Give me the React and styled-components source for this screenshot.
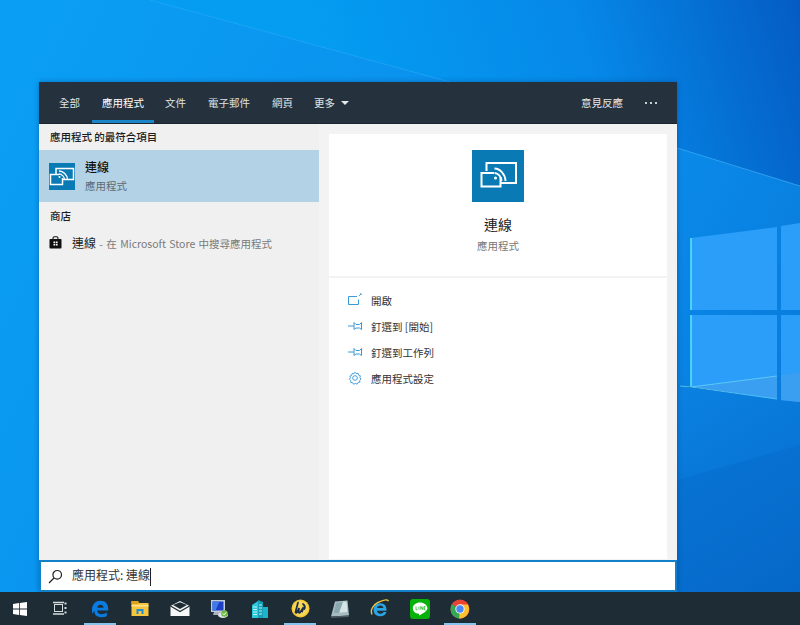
import React from "react";
import styled, { createGlobalStyle } from "styled-components";

const GlobalStyle = createGlobalStyle`
  html, body {
    margin: 0;
    padding: 0;
    overflow: hidden;
  }
  body {
    font-family: "Noto Sans CJK TC", "Noto Sans", sans-serif;
  }
`;

const Screen = styled.div`
  position: relative;
  width: 800px;
  height: 625px;
  display: flex;
  flex-direction: column;
  overflow: hidden;
  background: #0a7fdf;
`;

const Wallpaper = styled.svg`
  position: absolute;
  left: 0;
  top: 0;
`;

const Desktop = styled.div`
  position: relative;
  flex: 1;
  padding: 82px 0 0 39px;
`;

const Panel = styled.div`
  width: 638px;
  height: 510px;
  display: flex;
  flex-direction: column;
  box-shadow: 0 0 5px rgba(0, 40, 90, 0.4);
`;

const Header = styled.div`
  height: 42px;
  flex-shrink: 0;
  background: #25323d;
  border-bottom: 1px solid #1a252e;
  box-sizing: border-box;
  display: flex;
  align-items: stretch;
  padding: 0 20px;
  color: #e4e8ea;
  font-size: 10.5px;
`;

const Tab = styled.div`
  display: flex;
  align-items: center;
  gap: 6px;
  margin-right: ${p => p.$gap}px;
  position: relative;
  color: ${p => (p.$active ? "#ffffff" : "#dfe3e6")};
  &::after {
    content: "";
    display: ${p => (p.$active ? "block" : "none")};
    position: absolute;
    left: -10px;
    right: -10px;
    bottom: 0;
    height: 3px;
    background: #1a86c8;
  }
`;

const Caret = styled.span`
  width: 0;
  height: 0;
  border-left: 4px solid transparent;
  border-right: 4px solid transparent;
  border-top: 4px solid #e4e8ea;
`;

const HeaderRight = styled.div`
  margin-left: auto;
  display: flex;
  align-items: center;
  gap: 22px;
`;

const Dots = styled.div`
  display: flex;
  gap: 3px;
  & span {
    width: 2px;
    height: 2px;
    background: #c8ced2;
  }
`;

const Body = styled.div`
  flex: 1;
  min-height: 0;
  display: flex;
  background: #f3f3f3;
`;

const LeftColumn = styled.div`
  width: 280px;
  flex-shrink: 0;
  background: #f0f0f0;
  display: flex;
  flex-direction: column;
`;

const SectionTitle = styled.div`
  height: ${p => p.$height}px;
  box-sizing: border-box;
  padding: 0 0 2px 11px;
  display: flex;
  align-items: center;
  font-size: 10.5px;
  font-weight: 500;
  color: #1d1d1d;
`;

const BestMatch = styled.div`
  height: 52px;
  background: #b4d2e5;
  display: flex;
  align-items: center;
  padding-left: 10px;
  gap: 10px;
`;

const MatchText = styled.div`
  display: flex;
  flex-direction: column;
  gap: 4px;
  margin-top: -1px;
`;

const MatchName = styled.div`
  font-size: 12px;
  line-height: 16px;
  font-weight: 500;
  color: #111;
`;

const MatchKind = styled.div`
  font-size: 10.5px;
  line-height: 14px;
  color: #5c6b76;
`;

const StoreRow = styled.div`
  height: 28px;
  box-sizing: border-box;
  padding: 0 0 4px 10px;
  display: flex;
  align-items: center;
  gap: 10px;
  font-size: 10.5px;
  word-spacing: 1px;
  color: #7a7a7a;
  & b {
    font-weight: 400;
    font-size: 12px;
    color: #222;
  }
`;

const RightColumn = styled.div`
  flex: 1;
  padding: 10px 10px 0;
  display: flex;
`;

const Card = styled.div`
  flex: 1;
  background: #fff;
  display: flex;
  flex-direction: column;
  margin-bottom: 1px;
`;

const Hero = styled.div`
  height: 144px;
  flex-shrink: 0;
  box-sizing: border-box;
  padding-top: 16px;
  border-bottom: 2px solid #f3f3f3;
  display: flex;
  flex-direction: column;
  align-items: center;
`;

const HeroName = styled.div`
  margin-top: 11px;
  font-size: 14px;
  line-height: 22px;
  color: #1a1a1a;
`;

const HeroKind = styled.div`
  margin-top: 4px;
  font-size: 10.5px;
  line-height: 14px;
  color: #777;
`;

const Actions = styled.div`
  padding-top: 9px;
  display: flex;
  flex-direction: column;
`;

const Action = styled.div`
  height: 26px;
  display: flex;
  align-items: center;
  padding-left: 19px;
  gap: 9px;
  font-size: 10.5px;
  color: #333;
`;

const SearchBox = styled.div`
  height: 32px;
  flex-shrink: 0;
  box-sizing: border-box;
  background: #fff;
  border: 2px solid #1181c9;
  display: flex;
  align-items: center;
  padding-left: 7px;
  gap: 9px;
  font-size: 12px;
  color: #333;
`;

const Cursor = styled.span`
  display: inline-block;
  width: 1px;
  height: 18px;
  background: #222;
  vertical-align: middle;
`;

const Taskbar = styled.div`
  height: 33px;
  flex-shrink: 0;
  position: relative;
  background: #1e2c35;
  display: flex;
`;

const TaskItem = styled.div`
  width: 40px;
  display: flex;
  align-items: center;
  justify-content: center;
  position: relative;
  &::after {
    content: "";
    display: ${p => (p.$open ? "block" : "none")};
    position: absolute;
    left: 4px;
    right: 4px;
    bottom: 0;
    height: 2px;
    background: #84c4ee;
  }
`;

const ConnectGlyph = () => (
  <svg width="52" height="52" viewBox="0 0 52 52">
    <rect width="52" height="52" fill="#0a7ab5" />
    <path d="M14.500 21V13H44V33H29" fill="none" stroke="#fff" strokeWidth="2" />
    <path d="M22 23H9.500V36.500H28.500V27" fill="none" stroke="#fff" strokeWidth="2" />
    <path d="M22.500 18.500C28 18.500 33.500 24.500 33.500 31M22.500 23C26 23 29.500 26.500 29.500 31" fill="none" stroke="#fff" strokeWidth="1.800" />
    <circle cx="23.500" cy="28" r="1.500" fill="#fff" />
  </svg>
);

const SmallConnect = () => (
  <svg width="26" height="27" viewBox="0 0 26 27">
    <rect width="26" height="27" fill="#0a7ab5" />
    <path d="M7 11V5.500H24.500V16.500H13" fill="none" stroke="#fff" strokeWidth="1.500" />
    <path d="M10 11.500H1.500V21.500H13.500V15" fill="none" stroke="#fff" strokeWidth="1.500" />
    <path d="M10 8C14 8 18.500 12 18.500 16.500M10 11C12.500 11 15.500 13.500 15.500 16.500" fill="none" stroke="#fff" strokeWidth="1.300" />
    <circle cx="10.500" cy="14" r="1" fill="#fff" />
  </svg>
);

const BagIcon = () => (
  <svg width="13" height="13" viewBox="0 0 13 13">
    <path d="M4 3V2.200C4 1.300 4.600 .8 5.400 .8h2.200C8.400 .8 9 1.300 9 2.200V3" fill="none" stroke="#111" strokeWidth="1.100" />
    <rect x=".5" y="3" width="12" height="9.500" rx=".8" fill="#111" />
    <path d="M4.500 5.500h1.700v1.700H4.500zM6.900 5.500h1.700v1.700H6.900zM4.500 7.900h1.700v1.700H4.500zM6.900 7.900h1.700v1.700H6.900z" fill="#fff" />
  </svg>
);

const OpenIcon = () => (
  <svg width="14" height="14" viewBox="0 0 14 14" fill="none" stroke="#3a9ad8" strokeWidth="1">
    <path d="M9 3.500H.5V11.500H10.500V6.500" />
    <path d="M11 3l2-2M12 .8h1.200V2" strokeWidth=".9" />
  </svg>
);

const PinIcon = () => (
  <svg width="14" height="14" viewBox="0 0 14 14" fill="none" stroke="#3a9ad8" strokeWidth="1">
    <path d="M0 7h6M6 3.500l2 2h3.500l2-2v7l-2-1.500H8l-2 1.500z" />
  </svg>
);

const GearIcon = () => (
  <svg width="14" height="14" viewBox="0 0 24 24" fill="none" stroke="#3a9ad8" strokeWidth="1.600">
    <path d="M12 2l2 2.500 3.200-.6 1 3.100 3 1.200-.8 3.100 2 2.400-2.300 2.200.3 3.200-3.200.6-1.600 2.800-3-1.200-2.900 1.400-1.800-2.700-3.200-.4.100-3.200-2.400-2.100 1.800-2.600-1-3 3-1.300.8-3.100 3.200.5z" />
    <circle cx="12" cy="12" r="4" />
  </svg>
);

const SearchIcon = () => (
  <svg width="15" height="15" viewBox="0 0 15 15" fill="none" stroke="#222" strokeWidth="1.200">
    <circle cx="9.200" cy="5.800" r="4.300" />
    <path d="M6 9l-5 5" />
  </svg>
);

const StartIcon = () => (
  <svg width="14" height="14" viewBox="0 0 14 14" fill="#fff">
    <path d="M0 2l6-.9V6.600H0zM6.800 1L14 0V6.600H6.800zM0 7.400H6V12.900L0 12zM6.800 7.400H14V14L6.800 13z" />
  </svg>
);

const TaskViewIcon = () => (
  <svg width="15" height="15" viewBox="0 0 15 15" fill="none" stroke="#d8dde0" strokeWidth="1">
    <rect x="1.500" y="3.500" width="8" height="7" />
    <path d="M0 1.500h11M0 13h11" strokeWidth="1.400" />
    <path d="M11.500 2.500h2M11.500 7h2M11.500 11.500h2" strokeWidth="2" />
  </svg>
);

const EdgeIcon = () => (
  <svg width="18" height="18" viewBox="0 0 18 18">
    <path d="M1 10C1 4 5 .8 9.500 .8c5 0 7.700 3.500 7.700 8.200v1.500H6.200c.2 2.500 2 3.700 4.300 3.700 2 0 3.700-.6 5.300-1.600v3.300c-1.600 1-3.600 1.300-5.800 1.300C5 17.200 3.200 13.800 3.500 11 2.700 11.800 1.700 12.800 1 14zM6.300 7.700h6.200c0-1.900-1.200-3-3-3-1.700 0-2.900 1.200-3.200 3z" fill="#0a7be0" />
  </svg>
);

const FolderIcon = () => (
  <svg width="18" height="17" viewBox="0 0 18 17">
    <path d="M.5 1h6l1.500 2h9.500v13H.5z" fill="#f4c53d" />
    <rect x=".5" y="1" width="7" height="3" fill="#d9a21f" />
    <rect x=".5" y="5" width="17" height="1.500" fill="#fbe28c" />
    <rect x="5.500" y="9" width="7" height="5" fill="#1d8bd6" />
    <rect x="7.500" y="11" width="3" height="3" fill="#f4c53d" />
  </svg>
);

const MailIcon = () => (
  <svg width="20" height="15" viewBox="0 0 20 15">
    <path d="M.5 5L10 0l9.500 5v10H.5z" fill="#f6f7f8" />
    <path d="M.5 5l9.500 5.500L19.500 5" fill="none" stroke="#1e2c35" strokeWidth="1.200" />
    <path d="M3 4l7-2.800L17 4l-7 4z" fill="#1e2c35" />
  </svg>
);

const RemoteIcon = () => (
  <svg width="20" height="20" viewBox="0 0 20 20">
    <rect x="1" y="1" width="14" height="12" fill="#c3cdd8" />
    <rect x="2.500" y="2.500" width="11" height="9" fill="#1c3fc4" />
    <path d="M2.500 2.500h7l-4 9h-3z" fill="#3f7be8" />
    <path d="M4 13h8l2 3H3z" fill="#aab3bd" />
    <ellipse cx="13" cy="16" rx="5" ry="3" fill="#dfe3e6" />
    <circle cx="14.500" cy="14.500" r="3.300" fill="#6dbb45" />
    <path d="M12.800 14.500l1.300 1.400 2.200-2.600" fill="none" stroke="#fff" strokeWidth="1" />
  </svg>
);

const BuildingIcon = () => (
  <svg width="18" height="19" viewBox="0 0 18 19">
    <path d="M1 6l6-4v17H1z" fill="#2cc7d8" />
    <path d="M7 1l5 2v16H7z" fill="#15a0b8" />
    <path d="M12 8h5v11h-5z" fill="#1bb4c8" />
    <path d="M2 8h4M2 10.500h4M2 13h4M2 15.500h4M8 6h3M8 9h3M8 12h3M8 15h3" stroke="#b8f4f8" strokeWidth="1" />
  </svg>
);

const LwIcon = () => (
  <svg width="19" height="19" viewBox="0 0 19 19">
    <circle cx="9.500" cy="9.500" r="9" fill="#f4c835" />
    <circle cx="9.500" cy="9.500" r="7.500" fill="#f6d65a" />
    <path d="M7 3.500L4.500 13c-.2 1 1 1.200 1.500.4L8 9l-.3 4c0 1 1 1 1.500.3L12 9c.5 1-.4 2.500-.9 3.500M12 5c1.500 1 2.500 2.500 1.500 5" fill="none" stroke="#1c2b45" strokeWidth="1.700" strokeLinecap="round" />
  </svg>
);

const NoteIcon = () => (
  <svg width="20" height="18" viewBox="0 0 20 18">
    <path d="M5 1.500L17.500 .5 19 15.500 1 16.500z" fill="#a6bcc0" />
    <path d="M6 2.500L16.500 1.500 17.500 12 3.500 13z" fill="#d5e4e6" />
    <path d="M6 2.500L13 2 9 13H3.500z" fill="#8aa8ae" />
    <path d="M1 16.500L19 15.500 18.800 17 1.500 18z" fill="#4a5b62" />
  </svg>
);

const IeIcon = () => (
  <svg width="20" height="20" viewBox="0 0 20 20">
    <path d="M2 15.500C0 11 3 6 8 3.500c4-2 9-3.500 10.500-1.500" fill="none" stroke="#f0c23c" strokeWidth="1.400" />
    <path d="M3.500 11c0-4 2.800-6.800 6.800-6.800 4 0 6.200 2.800 6.200 6.500v1H7c.2 2 1.600 3 3.400 3 1.700 0 2.700-.6 3.100-1.700h3c-.8 2.800-3 4.300-6.200 4.300-4.100 0-6.800-2.500-6.800-6.300zM7 9h6.400c-.1-1.700-1.300-2.600-3.100-2.600C8.600 6.400 7.300 7.400 7 9z" fill="#2aa4e6" />
  </svg>
);

const LineIcon = () => (
  <svg width="20" height="20" viewBox="0 0 20 20">
    <rect width="20" height="20" rx="3" fill="#06b208" />
    <path d="M10 3.500c-4 0-7.200 2.500-7.200 5.700 0 2.800 2.500 5.200 5.800 5.600.5.100.5.400.4 1-.1.500.2.700.7.400 2-1.100 7.800-4.200 7.800-7C17.200 6 14 3.500 10 3.500z" fill="#fff" />
    <path d="M6 7.500v3.200h1.500M9 7.500v3.200M10.800 10.700V7.500l2 3.200V7.500M15.500 7.500h-1.400v3.200h1.400M14.100 9.100h1.300" fill="none" stroke="#06b208" strokeWidth=".7" />
  </svg>
);

const ChromeIcon = () => (
  <svg width="20" height="20" viewBox="0 0 20 20">
    <circle cx="10" cy="10" r="9.500" fill="#ea4335" />
    <path d="M10 10L1.800 5.200C.2 8 0 11.500 1.700 14.700 3.300 17.500 6 19.200 9 19.500z" fill="#34a853" />
    <path d="M10 10l-1 9.500c3.300.3 6.700-1.300 8.700-4.500 1.800-3 1.800-6.700.2-9.500H10z" fill="#fbc02d" />
    <circle cx="10" cy="10" r="4.700" fill="#f5f5f5" />
    <circle cx="10" cy="10" r="3.700" fill="#4a8af4" />
  </svg>
);

const tabs = [
  { label: "全部", gap: 22 },
  { label: "應用程式", gap: 21, active: true },
  { label: "文件", gap: 22 },
  { label: "電子郵件", gap: 22 },
  { label: "網頁", gap: 21 },
  { label: "更多", gap: 0, caret: true },
];

const actions = [
  { label: "開啟", icon: <OpenIcon /> },
  { label: "釘選到 [開始]", icon: <PinIcon /> },
  { label: "釘選到工作列", icon: <PinIcon /> },
  { label: "應用程式設定", icon: <GearIcon /> },
];

const taskIcons = [
  { id: "start", icon: <StartIcon /> },
  { id: "view", icon: <TaskViewIcon /> },
  { id: "edge", icon: <EdgeIcon />, open: true },
  { id: "folder", icon: <FolderIcon /> },
  { id: "mail", icon: <MailIcon /> },
  { id: "remote", icon: <RemoteIcon /> },
  { id: "building", icon: <BuildingIcon /> },
  { id: "lw", icon: <LwIcon />, open: true },
  { id: "note", icon: <NoteIcon /> },
  { id: "ie", icon: <IeIcon /> },
  { id: "line", icon: <LineIcon /> },
  { id: "chrome", icon: <ChromeIcon />, open: true },
];

const App = () => {
  return (
    <Screen>
      <GlobalStyle />
      <Wallpaper width="800" height="625" viewBox="0 0 800 625">
        <defs>
          <linearGradient id="sky" gradientUnits="userSpaceOnUse" x1="0" y1="100" x2="800" y2="500">
            <stop offset="0" stopColor="#0a9ef4" />
            <stop offset="0.7" stopColor="#0a8aea" />
            <stop offset="1" stopColor="#0878d8" />
          </linearGradient>
          <linearGradient id="upper" gradientUnits="userSpaceOnUse" x1="300" y1="0" x2="800" y2="-150">
            <stop offset="0" stopColor="#049df2" />
            <stop offset="0.5" stopColor="#0688e8" />
            <stop offset="0.95" stopColor="#0458c0" />
          </linearGradient>
          <linearGradient id="lower" gradientUnits="userSpaceOnUse" x1="677" y1="400" x2="800" y2="600">
            <stop offset="0" stopColor="#0a80e0" />
            <stop offset="1" stopColor="#0668c8" />
          </linearGradient>
        </defs>
        <rect width="800" height="625" fill="url(#sky)" />
        <path d="M0 0H800V186L677 148L450 82L150 0z" fill="url(#upper)" />
        <path d="M150 0L450 82" stroke="#2fb0f8" strokeWidth="1" opacity="0.5" />
        <path d="M677 148L800 186" stroke="#3fb0f8" strokeWidth="1" opacity="0.7" />
        <path d="M677 385L691 387L777 399L800 402V625H677z" fill="url(#lower)" />
        <path d="M677 480L800 445V625H677z" fill="#0668c8" opacity="0.35" />
        <path d="M691 238L777 227V310H691z" fill="#2a9ef8" />
        <path d="M781 226L800 223V310H781z" fill="#2a9ef8" />
        <path d="M691 315H777V399L691 387z" fill="#2a9ef8" />
        <path d="M781 315H800V402L781 400z" fill="#2a9ef8" />
        <path d="M691 387L777 376V399z" fill="#3a9ff0" />
        <path d="M781 375L800 372V402L781 400z" fill="#3a9ff0" />
        <path d="M691 238V310M691 315V387" stroke="#5ce6f8" strokeWidth="1.500" />
        <path d="M691 387L777 376" stroke="#5cc8f8" strokeWidth="1" />
        <path d="M680 386L691 387L777 399" stroke="#4cc0f8" strokeWidth="1" />
      </Wallpaper>
      <Desktop>
        <Panel>
          <Header>
            {tabs.map(t => (
              <Tab key={t.label} $active={t.active} $gap={t.gap}>
                {t.label}
                {t.caret && <Caret />}
              </Tab>
            ))}
            <HeaderRight>
              意見反應
              <Dots>
                <span />
                <span />
                <span />
              </Dots>
            </HeaderRight>
          </Header>
          <Body>
            <LeftColumn>
              <SectionTitle $height={26}>應用程式 的最符合項目</SectionTitle>
              <BestMatch>
                <SmallConnect />
                <MatchText>
                  <MatchName>連線</MatchName>
                  <MatchKind>應用程式</MatchKind>
                </MatchText>
              </BestMatch>
              <SectionTitle $height={28}>商店</SectionTitle>
              <StoreRow>
                <BagIcon />
                <span>
                  <b>連線</b> - 在 Microsoft Store 中搜尋應用程式
                </span>
              </StoreRow>
            </LeftColumn>
            <RightColumn>
              <Card>
                <Hero>
                  <ConnectGlyph />
                  <HeroName>連線</HeroName>
                  <HeroKind>應用程式</HeroKind>
                </Hero>
                <Actions>
                  {actions.map(a => (
                    <Action key={a.label}>
                      {a.icon}
                      {a.label}
                    </Action>
                  ))}
                </Actions>
              </Card>
            </RightColumn>
          </Body>
          <SearchBox>
            <SearchIcon />
            <span>
              應用程式: 連線
              <Cursor />
            </span>
          </SearchBox>
        </Panel>
      </Desktop>
      <Taskbar>
        {taskIcons.map(t => (
          <TaskItem key={t.id} $open={t.open}>
            {t.icon}
          </TaskItem>
        ))}
      </Taskbar>
    </Screen>
  );
};

export default App;
